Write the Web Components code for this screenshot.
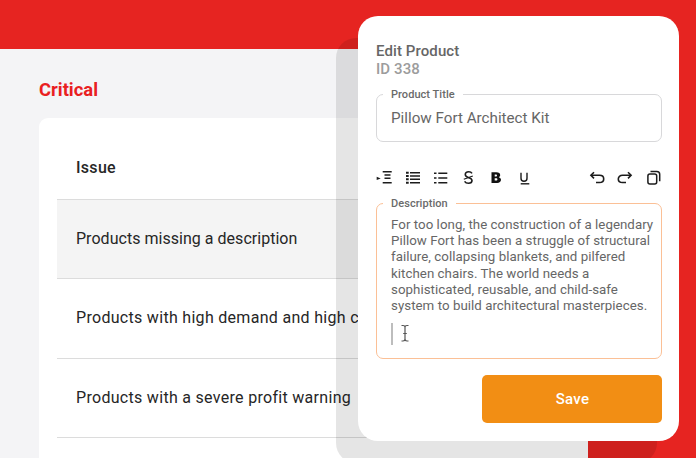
<!doctype html>
<html><head><meta charset="utf-8"><style>
html,body{margin:0;padding:0;background:#e62421}
body{font-family:Roboto,"Liberation Sans",sans-serif;width:696px;height:458px;overflow:hidden}
</style></head><body>
<app-shell>
  <issue-panel heading="Critical">
    <issue-row kind="head">Issue</issue-row>
    <issue-row kind="hover">Products missing a description</issue-row>
    <issue-row>Products with high demand and high c</issue-row>
    <issue-row>Products with a severe profit warning</issue-row>
    <issue-row></issue-row>
  </issue-panel>
  <edit-modal slot="modal"></edit-modal>
</app-shell>
<script>
function def(name,html,extra){
  const t=document.createElement('template');t.innerHTML=html;
  customElements.define(name,class extends HTMLElement{
    constructor(){super();this.attachShadow({mode:'open'}).appendChild(t.content.cloneNode(true));}
    connectedCallback(){extra&&extra.call(this)}
  });
}
def('app-shell',`<style>
:host{display:block;position:relative;width:696px;height:458px;overflow:hidden;background:#e62421;padding-top:49px;box-sizing:border-box}
.page{width:588px;height:409px;background:#f4f4f6;padding:0 0 0 39px;box-sizing:border-box;overflow:hidden}
::slotted(edit-modal){position:absolute;left:358px;top:16px}
</style><div class="page"><slot></slot></div><slot name="modal"></slot>`);
def('issue-panel',`<style>
:host{display:block;padding-top:29px}
h2{margin:0 0 16px;font:700 18.400px/24px Roboto,sans-serif;color:#e9201f}
.card{background:#fff;border-radius:9px 9px 0 0;padding:0 0 0 18px;height:400px;overflow:hidden}
</style><h2></h2><div class="card"><slot></slot></div>`,function(){this.shadowRoot.querySelector('h2').textContent=this.getAttribute('heading')});
def('issue-row',`<style>
:host{display:block;height:79.300px;box-sizing:border-box;padding-left:19px;border-bottom:1px solid #dcdcdc;font:400 16px/77px Roboto,sans-serif;letter-spacing:.3px;color:#262626;white-space:nowrap;overflow:hidden}
:host([kind=head]){height:82px;font-weight:500;line-height:99px}
:host([kind=hover]){background:#f4f4f4;letter-spacing:.03px}
</style><slot></slot>`);
const I=(d)=>`<svg viewBox="0 0 18 18" width="18" height="18" fill="none" stroke="#1c1c1c" stroke-width="1.500">${d}</svg>`;
def('edit-toolbar',`<style>
:host{display:flex;align-items:center;height:18px;margin-left:-1px}
.g{display:flex;gap:10px}.sp{flex:1}
svg{display:block}
</style>
<div class="g">
${I('<path d="M7.700 2.700h9M9.500 6h6M9.500 9.300h6M7.700 13.700h9"/><path d="M1.700 7.700l4 1.700-4 1.700z" fill="#1c1c1c" stroke="none"/>')}
${I('<path d="M7 3.700h10M7 7h10M7 10.300h10M7 13.700h10"/><path d="M3 3.700h2.700M3 7h2.700M3 10.300h2.700M3 13.700h2.700" stroke-width="2"/>')}
${I('<path d="M7.300 4.300h9M7.300 9h9M7.300 13.700h9"/><path d="M3 4.300h2.500M3 9h2.500M3 13.700h2.500" stroke-width="1.500"/>')}
${I('<path d="M13 4.400C12.300 3.200 11.200 2.700 9.800 2.700 7.800 2.700 6.300 3.900 6.300 5.600c0 1.500 1 2.200 3 2.800 2.400.7 3.700 1.400 3.700 3.100 0 1.700-1.400 2.800-3.500 2.800-1.600 0-3.100-.6-3.900-1.900" stroke-width="1.600"/><path d="M4.800 10.300L13.800 7" stroke-width="1.200"/>')}
${I('<path d="M4.500 3.300h5c2.200 0 3.700 1.100 3.700 2.700 0 1-.5 1.800-1.400 2.200 1.300.4 2.200 1.300 2.200 2.600 0 1.900-1.500 3.100-3.900 3.100H4.500z" fill="#111" stroke="none"/><path d="M7.700 5.500v1.900h1.300c.6 0 1-.4 1-.95s-.4-.95-1-.95zM7.700 9.300v2.300h1.600c.7 0 1.100-.5 1.100-1.150s-.4-1.150-1.100-1.150z" fill="#fff" stroke="none"/>')}
${I('<path d="M6 3.700v5.500c0 2 1.100 3.100 3 3.100s3-1.100 3-3.100V3.700" stroke-width="1.400"/><path d="M5.700 14.800h8.600" stroke-width="1.400"/>')}
</div><div class="sp"></div>
<div class="g">
${I('<path d="M6 3.200L2.900 6.300 6 9.400" stroke-width="1.600"/><path d="M3 6.300h8.500c2.500 0 4.200 1.500 4.200 3.600s-1.700 3.600-4.200 3.600H8" stroke-width="1.600"/>')}
${I('<path d="M12 3.200l3.100 3.100L12 9.400" stroke-width="1.600"/><path d="M15 6.300H6.500C4 6.300 2.300 7.800 2.300 9.900s1.700 3.600 4.200 3.600H10" stroke-width="1.600"/>')}
${I('<rect x="3.900" y="4.900" width="8.800" height="10" rx="2"/><path d="M6.500 2.400h6.300c1.900 0 2.900 1 2.900 2.900v7"/>')}
</div>`);
def('edit-field',`<style>
:host{display:block;position:relative;box-sizing:border-box;border:1px solid #d8d8da;border-radius:7px;padding:12px 6px 0 14px;color:#666}
:host([active]){border-color:#fbc096}
.l{position:absolute;left:6px;top:-7px;padding:0 8px;background:#fff;font:500 11px/13px Roboto,sans-serif;color:#6a6a6a;letter-spacing:.05px}
</style><span class="l"></span><slot></slot>`,function(){this.shadowRoot.querySelector('.l').textContent=this.getAttribute('label')});
def('edit-modal',`<style>
:host{display:flex;flex-direction:column;box-sizing:border-box;width:321px;height:425px;background:#fff;border-radius:20px;box-shadow:-22px 22px 0 rgba(0,0,0,.1);padding:26px 17px 0 18px;font-family:Roboto,sans-serif}
.t{font:500 15px/18px Roboto,sans-serif;color:#666;letter-spacing:.1px}
.i{font:500 15px/18px Roboto,sans-serif;color:#9c9c9c;letter-spacing:.1px}
.title{height:48px;margin-top:16px;font:400 15.200px/22px Roboto,sans-serif}
.title span{display:block}
edit-toolbar{margin-top:27px}
.desc{height:156px;margin-top:16px}
p{margin:1px 0 0;font:400 13.300px/16.200px Roboto,sans-serif;color:#666;letter-spacing:.04px;white-space:nowrap}
.caret{display:flex;align-items:flex-start;margin-top:9px;height:22px}
.caret i{display:block;width:1.500px;height:22px;background:#bdbdbd}
.caret svg{margin-left:7px;margin-top:1px}
button{align-self:flex-end;width:180px;height:48px;margin-top:16px;border:0;border-radius:5px;background:#f28e14;color:#fff;font:500 15px/48px Roboto,sans-serif;letter-spacing:.3px;padding:0 0 0 1px}
</style>
<div class="t">Edit Product</div><div class="i">ID 338</div>
<edit-field class="title" label="Product Title"><span>Pillow Fort Architect Kit</span></edit-field>
<edit-toolbar></edit-toolbar>
<edit-field class="desc" label="Description" active>
<p>For too long, the construction of a legendary<br>Pillow Fort has been a struggle of structural<br>failure, collapsing blankets, and pilfered<br>kitchen chairs. The world needs a<br>sophisticated, reusable, and child-safe<br>system to build architectural masterpieces.</p>
<div class="caret"><i></i><svg width="10" height="19" viewBox="0 0 10 19" fill="none" stroke="#555" stroke-width="1.200"><path d="M1.500 1.500h1.500c1.200 0 2 .6 2 1.800v11.800c0 1.200-.8 1.900-2 1.900H1.500M8.500 1.500H7c-1.200 0-2 .6-2 1.800v11.800c0 1.200.8 1.900 2 1.900h1.500M3.200 9.500h3.600"/></svg></div>
</edit-field>
<button>Save</button>`);
</script>
</body></html>
